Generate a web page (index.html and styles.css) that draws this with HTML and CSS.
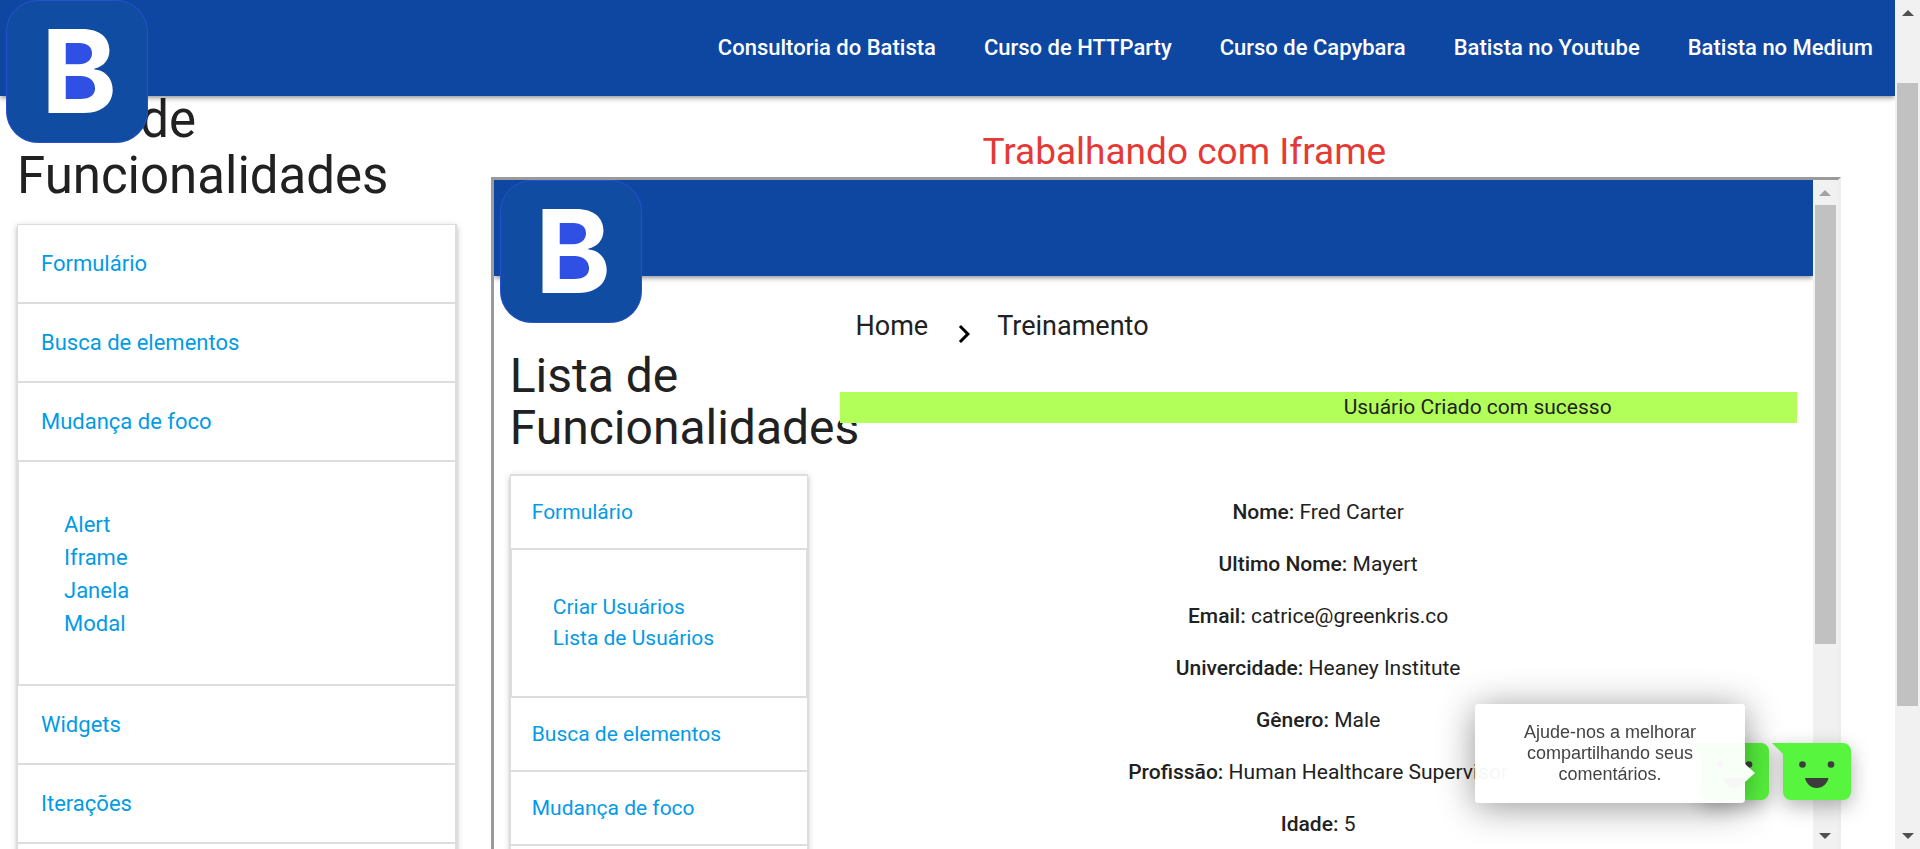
FILE: index.html
```html
<!DOCTYPE html>
<html lang="pt-BR">
<head>
<meta charset="utf-8">
<title>Trabalhando com Iframe</title>
<link rel="stylesheet" href="styles.css">
</head>
<body>
<svg width="0" height="0" class="defs" aria-hidden="true">
  <symbol id="logo" viewBox="0 0 142 143">
    <rect x="0.5" y="0.5" width="141" height="142" rx="31" fill="#104ca2" stroke="#2a50d0"/>
    <rect x="50" y="40" width="38" height="64" fill="#304fe4"/>
    <text x="35" y="113" class="logo-letter">B</text>
  </symbol>
  <symbol id="up" viewBox="0 0 12 6"><path d="M0 6L6 0l6 6z"/></symbol>
  <symbol id="down" viewBox="0 0 12 6"><path d="M0 0h12L6 6z"/></symbol>
  <symbol id="smile" viewBox="0 0 80 57">
    <path d="M0 0h71a8 8 0 0 1 8 8v41a8 8 0 0 1-8 8H19a8 8 0 0 1-8-8V11z" fill="#58f53e"/>
    <circle cx="30.500" cy="21.500" r="3.300" fill="#3c3c3c"/>
    <circle cx="59" cy="21.500" r="3.300" fill="#3c3c3c"/>
    <path d="M33 35h23.500c-1 5-5.500 10-11.800 10S34 40 33 35z" fill="#3c3c3c"/>
  </symbol>
</svg>
<div class="window">
  <div class="page">
    <nav class="navbar">
      <a class="logo" href="#" aria-label="Início"><svg width="142" height="143"><use href="#logo"/></svg></a>
      <a class="nav-link" href="#">Consultoria do Batista</a>
      <a class="nav-link" href="#">Curso de HTTParty</a>
      <a class="nav-link" href="#">Curso de Capybara</a>
      <a class="nav-link" href="#">Batista no Youtube</a>
      <a class="nav-link" href="#">Batista no Medium</a>
    </nav>
    <div class="columns">
      <aside class="side">
        <h4 class="side-title">Lista de Funcionalidades</h4>
        <ul class="menu">
          <li><a class="menu-head" href="#">Formulário</a></li>
          <li><a class="menu-head" href="#">Busca de elementos</a></li>
          <li><a class="menu-head" href="#">Mudança de foco</a>
            <div class="menu-body">
              <a href="#">Alert</a>
              <a href="#">Iframe</a>
              <a href="#">Janela</a>
              <a href="#">Modal</a>
            </div>
          </li>
          <li><a class="menu-head" href="#">Widgets</a></li>
          <li><a class="menu-head" href="#">Iterações</a></li>
        </ul>
      </aside>
      <main class="main">
        <h5 class="main-title">Trabalhando com Iframe</h5>
        <section class="frame">
          <div class="frame-page">
            <nav class="navbar">
              <a class="logo" href="#" aria-label="Início"><svg width="142" height="143"><use href="#logo"/></svg></a>
            </nav>
            <div class="columns">
              <aside class="side">
                <h4 class="side-title">Lista de Funcionalidades</h4>
                <ul class="menu">
                  <li><a class="menu-head" href="#">Formulário</a>
                    <div class="menu-body">
                      <a href="#">Criar Usuários</a>
                      <a href="#">Lista de Usuários</a>
                    </div>
                  </li>
                  <li><a class="menu-head" href="#">Busca de elementos</a></li>
                  <li><a class="menu-head" href="#">Mudança de foco</a></li>
                </ul>
              </aside>
              <div class="content">
                <div class="breadcrumb">
                  <a href="#">Home</a>
                  <svg width="36" height="36" viewBox="0 0 24 24"><path d="M10 6L8.590 7.410 13.170 12l-4.580 4.590L10 18l6-6z"/></svg>
                  <a href="#">Treinamento</a>
                </div>
                <div class="notice"><p>Usuário Criado com sucesso</p></div>
                <div class="details">
                  <p><strong>Nome:</strong> Fred Carter</p>
                  <p><strong>Ultimo Nome:</strong> Mayert</p>
                  <p><strong>Email:</strong> catrice@greenkris.co</p>
                  <p><strong>Univercidade:</strong> Heaney Institute</p>
                  <p><strong>Gênero:</strong> Male</p>
                  <p><strong>Profissão:</strong> Human Healthcare Supervisor</p>
                  <p><strong>Idade:</strong> 5</p>
                </div>
              </div>
            </div>
          </div>
          <div class="scrollbar scrollbar-inner">
            <svg class="arrow arrow-off" width="12" height="6"><use href="#up"/></svg>
            <div class="track"><div class="thumb"></div></div>
            <svg class="arrow" width="12" height="6"><use href="#down"/></svg>
          </div>
        </section>
      </main>
    </div>
  </div>
  <div class="scrollbar scrollbar-outer">
    <svg class="arrow" width="12" height="6"><use href="#up"/></svg>
    <div class="track"><div class="thumb"></div></div>
    <svg class="arrow" width="12" height="6"><use href="#down"/></svg>
  </div>
</div>
<div class="feedback">
  <button class="smile" aria-label="Feedback"><svg width="80" height="57"><use href="#smile"/></svg></button>
  <button class="smile" aria-label="Comentários"><svg width="80" height="57"><use href="#smile"/></svg></button>
  <div class="tip">Ajude-nos a melhorar compartilhando seus comentários.</div>
</div>
</body>
</html>
```
FILE: styles.css
```css
* { box-sizing: border-box; }
body {
  margin: 0;
  font-family: Roboto, "Liberation Sans", sans-serif;
  color: #212121;
  background: #fff;
}
a { color: #039be5; text-decoration: none; }
h4, h5, p, ul { margin: 0; padding: 0; font-weight: 400; }
ul { list-style: none; }
svg { display: block; }
.defs { position: absolute; }
.logo-letter { font: 700 115px Inter, sans-serif; fill: #fff; }

.window { display: flex; height: 100vh; overflow: hidden; }
.page { position: relative; flex: 1; min-width: 0; overflow: hidden; }

.navbar {
  position: absolute;
  top: 0;
  left: 0;
  right: 0;
  z-index: 2;
  display: flex;
  justify-content: flex-end;
  height: 96px;
  background: #0d47a1;
  box-shadow: 0 3px 3px rgba(0,0,0,.14), 0 4px 2px -3px rgba(0,0,0,.12), 0 2px 7px rgba(0,0,0,.2);
}
.logo { position: absolute; left: 6px; top: 0; }
.nav-link { padding: 0 22px 0 26px; color: #fff; font-size: 22px; font-weight: 500; line-height: 96px; }

.columns { display: flex; }
.page > .columns { height: 100%; }
.side { width: 25%; padding: 92px 17px 0; }
.side-title { margin-bottom: 20px; font-size: 51px; line-height: 56px; }
.menu {
  padding-bottom: 24px;
  border: 1px solid #ddd;
  border-right-width: 2px;
  box-shadow: 0 3px 3px rgba(0,0,0,.14), 0 4px 2px -3px rgba(0,0,0,.12), 0 2px 7px rgba(0,0,0,.2);
}
.menu-head {
  display: block;
  padding: 23px 23px 22px;
  border-bottom: 2px solid #ddd;
  font-size: 22px;
  line-height: 32px;
}
.menu-body {
  display: flex;
  flex-direction: column;
  padding: 46px 45px 44px;
  border-left: 1px solid #ddd;
  border-bottom: 2px solid #ddd;
  font-size: 22px;
  line-height: 33px;
}

.main { display: flex; flex-direction: column; width: 75%; padding: 132px 17px 0; }
.main-title { margin-bottom: 5px; color: #e53935; font-size: 37px; line-height: 40px; text-align: center; }
.frame {
  display: flex;
  flex: 1;
  min-height: 0;
  max-width: 1350px;
  border: 3px solid #9a9a9a;
  border-right-color: #eee;
  border-bottom: 0;
}
.frame-page { position: relative; flex: 1; min-width: 0; overflow: hidden; }
.frame .side { padding: 170px 16px 0; }
.frame .side-title { font-size: 48px; line-height: 52px; }
.frame .menu { border-top-width: 2px; border-right-width: 1px; }
.frame .menu-head { padding: 20px 21px; font-size: 21px; line-height: 32px; }
.frame .menu-body { padding: 42px 41px; border-right: 1px solid #ddd; font-size: 21px; line-height: 31px; }

.content { position: relative; width: 75%; padding: 130px 16px 0; }
.breadcrumb { display: flex; align-items: flex-start; padding-left: 16px; margin-bottom: 40px; font-size: 27px; line-height: 32px; }
.breadcrumb a { color: #212121; }
.breadcrumb svg { margin: 6px 15px 0 18px; }
.notice { background: #b2ff59; font-size: 21px; line-height: 31px; }
.notice p { margin-left: calc(100% / 3); text-align: center; }
.details { margin-top: 74px; font-size: 21px; line-height: 31px; text-align: center; }
.details p { margin-bottom: 21px; }
.details strong { font-weight: 500; }

.scrollbar { display: flex; flex-direction: column; align-items: center; width: 25px; padding: 10px 0; background: #f1f1f1; }
.track { flex: 1; width: 21px; margin: 9px 0; }
.thumb { background: #c1c1c1; }
.scrollbar-outer .thumb { height: 78%; margin-top: 58px; }
.scrollbar-inner .thumb { height: 71%; }
.arrow { fill: #505050; }
.arrow-off { fill: #a3a3a3; }

.feedback { position: fixed; right: 68px; bottom: 49px; z-index: 3; display: flex; gap: 2px; }
.smile { display: block; padding: 0; border: 0; background: none; filter: drop-shadow(0 6px 10px rgba(0,0,0,.3)); }
.tip {
  position: absolute;
  right: 107px;
  bottom: -3px;
  width: 270px;
  padding: 18px 45px;
  border-radius: 4px;
  background: rgba(255,255,255,.96);
  box-shadow: 0 4px 36px rgba(0,0,0,.42);
  color: #444;
  font-family: "Liberation Sans", Arial, sans-serif;
  font-size: 18px;
  line-height: 21px;
  text-align: center;
}
.tip::after {
  content: "";
  position: absolute;
  left: 100%;
  top: 60px;
  border: 9px solid transparent;
  border-left: 10px solid rgba(255,255,255,.96);
  border-right: 0;
}
```
